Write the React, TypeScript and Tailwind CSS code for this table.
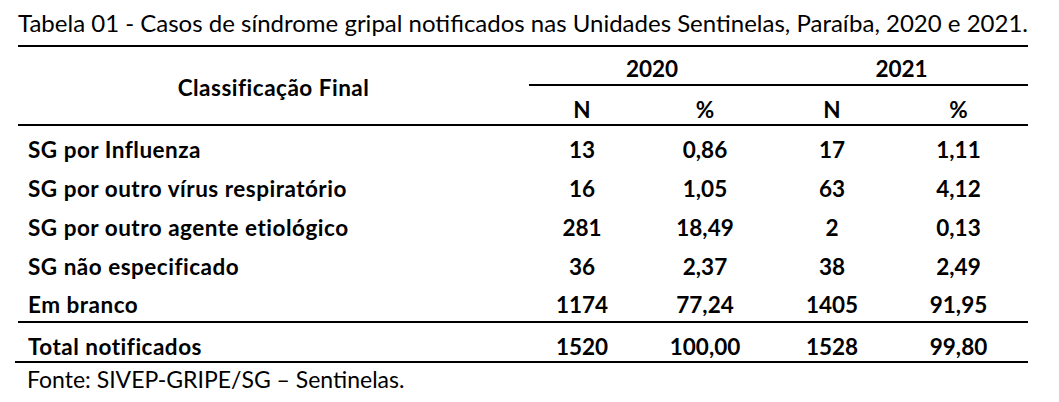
const rows = [
  ["SG por Influenza", "13", "0,86", "17", "1,11"],
  ["SG por outro vírus respiratório", "16", "1,05", "63", "4,12"],
  ["SG por outro agente etiológico", "281", "18,49", "2", "0,13"],
  ["SG não especificado", "36", "2,37", "38", "2,49"],
  ["Em branco", "1174", "77,24", "1405", "91,95"],
];

const total = ["Total notificados", "1520", "100,00", "1528", "99,80"];

// column widths of the four numeric columns
const numCols = ["w-[106px]", "w-[140px]", "w-[114px]", "w-[139px]"];

function Row({ cells, last }: { cells: string[]; last?: boolean }) {
  return (
    <div
      className={
        "flex items-end " +
        (last ? "h-[41px] pb-[3px] border-b-2 border-black" : "h-[39px] pb-[2px]")
      }
    >
      <div className="w-[511px] pl-[10px] tracking-[0.5px]">{cells[0]}</div>
      {cells.slice(1).map((c, i) => (
        <div key={i} className={numCols[i] + " text-center"}>
          {c}
        </div>
      ))}
    </div>
  );
}

export default function App() {
  return (
    <div
      className="w-[1059px] h-[402px] bg-white text-black overflow-hidden"
      style={{ fontFamily: "Lato, 'Open Sans', sans-serif" }}
    >
      <div className="h-[45px] pl-[18px] pt-[9px] text-[24px] leading-[1.2] whitespace-nowrap">
        Tabela 01 - Casos de síndrome gripal notificados nas Unidades Sentinelas, Paraíba, 2020 e 2021.
      </div>

      <div className="ml-[18px] w-[1010px] border-t-2 border-black font-bold text-[22.5px] leading-[1.2]">
        {/* header */}
        <div className="flex border-b-2 border-black">
          <div className="w-[511px] flex items-center justify-center pt-[4px] tracking-[0.5px]">
            Classificação Final
          </div>
          <div className="flex-1 flex flex-col">
            <div className="flex h-[39px] items-end pb-[2px] border-b-2 border-black">
              <div className="w-[246px] text-center">2020</div>
              <div className="flex-1 text-center">2021</div>
            </div>
            <div className="flex h-[38px] items-end pb-[1px]">
              {["N", "%", "N", "%"].map((h, i) => (
                <div key={i} className={numCols[i] + " text-center"}>
                  {h}
                </div>
              ))}
            </div>
          </div>
        </div>

        {/* body */}
        {rows.map((r, i) => (
          <Row key={i} cells={r} last={i === rows.length - 1} />
        ))}
        <div className="-ml-[3px] pl-[3px] border-b-2 border-black">
          <div className="flex h-[38px] items-end pb-[1px]">
            <div className="w-[511px] pl-[10px] tracking-[0.5px]">{total[0]}</div>
            {total.slice(1).map((c, i) => (
              <div key={i} className={numCols[i] + " text-center"}>
                {c}
              </div>
            ))}
          </div>
        </div>
      </div>

      <div className="pl-[27px] pt-[3px] text-[23px] leading-[1.2]">
        Fonte: SIVEP-GRIPE/SG – Sentinelas.
      </div>
    </div>
  );
}
